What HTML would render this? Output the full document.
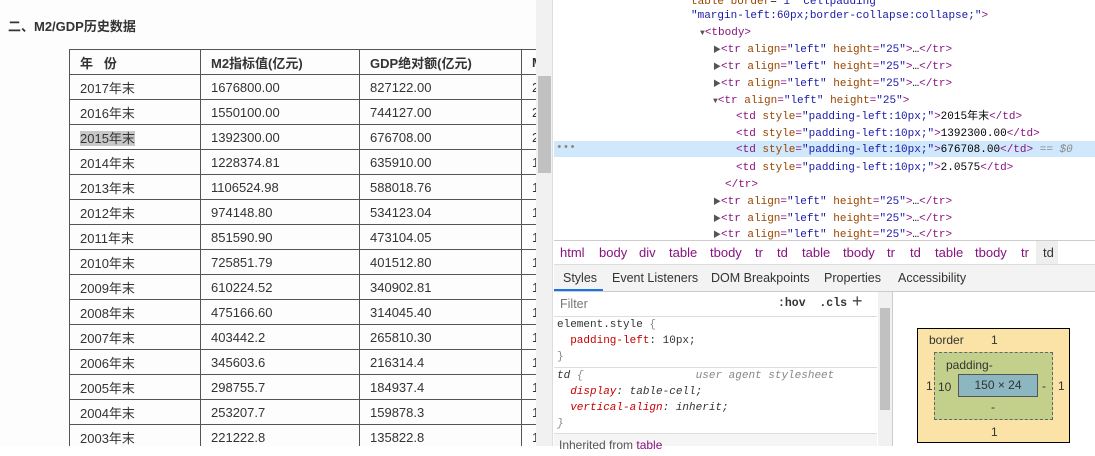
<!DOCTYPE html>
<html><head><meta charset="utf-8"><style>
*{margin:0;padding:0;box-sizing:border-box}
body{width:1095px;height:446px;overflow:hidden;background:#fff;position:relative;font-family:"Liberation Sans","Noto Sans CJK SC",sans-serif}
#page{position:absolute;left:0;top:0;width:536px;height:446px;background:#fdfdfd;overflow:hidden}
h2{position:absolute;left:8px;top:16px;font-size:13px;font-weight:bold;color:#333}
table{position:absolute;left:69px;top:49px;border-collapse:collapse;font-size:13px;color:#333;table-layout:fixed;width:513px}
td{border:1px solid #555;height:25px;padding-left:10px;white-space:nowrap;overflow:hidden}
tr.h td{font-weight:bold}
.sel{background:#c8c8c8}
#sb{position:absolute;left:536px;top:0;width:17px;height:446px;background:#f1f1f1;border-right:1px solid #ddd}
#th{position:absolute;left:538px;top:76px;width:13px;height:97px;background:#c1c1c1}
#dt{position:absolute;left:554px;top:0;width:541px;height:446px;background:#fff}
.m{font-family:"Liberation Mono","Noto Sans CJK SC",monospace;font-size:11px;white-space:pre;position:absolute;line-height:17px}
.t{color:#881280}.a{color:#994500}.v{color:#1a1aa6}.g{color:#888}
.tri{color:#555;font-size:8px}
#crumb{position:absolute;left:0;top:240px;width:541px;height:25px;border-top:1px solid #ccc;border-bottom:1px solid #ddd;font-size:13px;color:#881280;font-family:"Liberation Sans",sans-serif}
#crumb span{position:absolute;top:4px}
#tabs{position:absolute;left:0;top:265px;width:541px;height:27px;border-bottom:1px solid #ccc;font-size:12.5px;color:#333;background:#f3f3f3}
#tabs span{position:absolute;top:6px}
</style></head><body>
<div id="page">
<h2>二、M2/GDP历史数据</h2>
<table>
<colgroup><col style="width:131px"><col style="width:159px"><col style="width:162px"><col style="width:61px"></colgroup>
<tr class="h"><td>年&nbsp;&nbsp;&nbsp;份</td><td>M2指标值(亿元)</td><td>GDP绝对额(亿元)</td><td>M2/GDP</td></tr>
<tr><td>2017年末</td><td>1676800.00</td><td>827122.00</td><td>2.0273</td></tr>
<tr><td>2016年末</td><td>1550100.00</td><td>744127.00</td><td>2.0831</td></tr>
<tr><td><span class="sel">2015年末</span></td><td>1392300.00</td><td>676708.00</td><td>2.0575</td></tr>
<tr><td>2014年末</td><td>1228374.81</td><td>635910.00</td><td>1.9317</td></tr>
<tr><td>2013年末</td><td>1106524.98</td><td>588018.76</td><td>1.8818</td></tr>
<tr><td>2012年末</td><td>974148.80</td><td>534123.04</td><td>1.8238</td></tr>
<tr><td>2011年末</td><td>851590.90</td><td>473104.05</td><td>1.8000</td></tr>
<tr><td>2010年末</td><td>725851.79</td><td>401512.80</td><td>1.8078</td></tr>
<tr><td>2009年末</td><td>610224.52</td><td>340902.81</td><td>1.7900</td></tr>
<tr><td>2008年末</td><td>475166.60</td><td>314045.40</td><td>1.5130</td></tr>
<tr><td>2007年末</td><td>403442.2</td><td>265810.30</td><td>1.5178</td></tr>
<tr><td>2006年末</td><td>345603.6</td><td>216314.4</td><td>1.5977</td></tr>
<tr><td>2005年末</td><td>298755.7</td><td>184937.4</td><td>1.6154</td></tr>
<tr><td>2004年末</td><td>253207.7</td><td>159878.3</td><td>1.5837</td></tr>
<tr><td>2003年末</td><td>221222.8</td><td>135822.8</td><td>1.6288</td></tr>
</table>
</div>
<div id="sb"></div><div id="th"></div>
<div id="dt">
<div style="position:absolute;left:0;top:141px;width:541px;height:16px;background:#cfe8fc"></div>
<div class="m g" style="left:2px;top:140px">•••</div>
<div class="m" style="left:137px;top:-6px"><span class="a">table border</span>=<span class="v">"1" cellpadding</span></div>
<div class="m" style="left:137px;top:8px"><span class="v">"margin-left:60px;border-collapse:collapse;"</span><span class="t">&gt;</span></div>
<div class="m" style="left:146px;top:25px"><span class="tri">▼</span><span class="t">&lt;tbody&gt;</span></div>
<div class="m" style="left:159px;top:42px"><span class="tri">▶</span><span class="t">&lt;tr </span><span class="a">align</span><span class="t">=</span><span class="v">"left"</span> <span class="a">height</span><span class="t">=</span><span class="v">"25"</span><span class="t">&gt;</span>…<span class="t">&lt;/tr&gt;</span></div>
<div class="m" style="left:159px;top:59px"><span class="tri">▶</span><span class="t">&lt;tr </span><span class="a">align</span><span class="t">=</span><span class="v">"left"</span> <span class="a">height</span><span class="t">=</span><span class="v">"25"</span><span class="t">&gt;</span>…<span class="t">&lt;/tr&gt;</span></div>
<div class="m" style="left:159px;top:76px"><span class="tri">▶</span><span class="t">&lt;tr </span><span class="a">align</span><span class="t">=</span><span class="v">"left"</span> <span class="a">height</span><span class="t">=</span><span class="v">"25"</span><span class="t">&gt;</span>…<span class="t">&lt;/tr&gt;</span></div>
<div class="m" style="left:159px;top:93px"><span class="tri">▼</span><span class="t">&lt;tr </span><span class="a">align</span><span class="t">=</span><span class="v">"left"</span> <span class="a">height</span><span class="t">=</span><span class="v">"25"</span><span class="t">&gt;</span></div>
<div class="m" style="left:182px;top:109px"><span class="t">&lt;td </span><span class="a">style</span><span class="t">=</span><span class="v">"padding-left:10px;"</span><span class="t">&gt;</span>2015年末<span class="t">&lt;/td&gt;</span></div>
<div class="m" style="left:182px;top:126px"><span class="t">&lt;td </span><span class="a">style</span><span class="t">=</span><span class="v">"padding-left:10px;"</span><span class="t">&gt;</span>1392300.00<span class="t">&lt;/td&gt;</span></div>
<div class="m" style="left:182px;top:142px"><span class="t">&lt;td </span><span class="a">style</span><span class="t">=</span><span class="v">"padding-left:10px;"</span><span class="t">&gt;</span>676708.00<span class="t">&lt;/td&gt;</span> <span class="g">== <i>$0</i></span></div>
<div class="m" style="left:182px;top:160px"><span class="t">&lt;td </span><span class="a">style</span><span class="t">=</span><span class="v">"padding-left:10px;"</span><span class="t">&gt;</span>2.0575<span class="t">&lt;/td&gt;</span></div>
<div class="m" style="left:171px;top:177px"><span class="t">&lt;/tr&gt;</span></div>
<div class="m" style="left:159px;top:194px"><span class="tri">▶</span><span class="t">&lt;tr </span><span class="a">align</span><span class="t">=</span><span class="v">"left"</span> <span class="a">height</span><span class="t">=</span><span class="v">"25"</span><span class="t">&gt;</span>…<span class="t">&lt;/tr&gt;</span></div>
<div class="m" style="left:159px;top:211px"><span class="tri">▶</span><span class="t">&lt;tr </span><span class="a">align</span><span class="t">=</span><span class="v">"left"</span> <span class="a">height</span><span class="t">=</span><span class="v">"25"</span><span class="t">&gt;</span>…<span class="t">&lt;/tr&gt;</span></div>
<div class="m" style="left:159px;top:227px"><span class="tri">▶</span><span class="t">&lt;tr </span><span class="a">align</span><span class="t">=</span><span class="v">"left"</span> <span class="a">height</span><span class="t">=</span><span class="v">"25"</span><span class="t">&gt;</span>…<span class="t">&lt;/tr&gt;</span></div>
<div id="crumb"><span style="left:6px">html</span><span style="left:45px">body</span><span style="left:85px">div</span><span style="left:115px">table</span><span style="left:156px">tbody</span><span style="left:201px">tr</span><span style="left:223px">td</span><span style="left:248px">table</span><span style="left:289px">tbody</span><span style="left:333px">tr</span><span style="left:356px">td</span><span style="left:381px">table</span><span style="left:421px">tbody</span><span style="left:467px">tr</span><div style="position:absolute;left:482px;top:0;width:22px;height:23px;background:#eee"></div><span style="left:489px;color:#333">td</span></div>
<div id="tabs"><span style="left:9px">Styles</span><div style="position:absolute;left:0;top:24px;width:49px;height:2px;background:#1a73e8"></div><span style="left:58px">Event Listeners</span><span style="left:157px">DOM Breakpoints</span><span style="left:270px">Properties</span><span style="left:344px">Accessibility</span></div>
<div style="position:absolute;left:0;top:292px;width:323px;height:24px;font-size:12.5px;color:#777"><span style="position:absolute;left:6px;top:5px">Filter</span></div>
<div class="m" style="left:224px;top:295px;font-weight:bold;color:#333;font-size:11.5px">:hov  .cls</div>
<div style="position:absolute;left:298px;top:291px;font-size:18px;color:#444">+</div>
<div style="position:absolute;left:0;top:316px;width:323px;height:130px;border-top:1px solid #ddd"></div>
<div class="m" style="left:3px;top:317px;line-height:16px;color:#333">element.style <span class="g">{</span>
  <span style="color:#c80000">padding-left</span>: 10px;
<span class="g">}</span></div>
<div style="position:absolute;left:0;top:367px;width:323px;border-top:1px solid #ddd"></div>
<div class="m" style="left:3px;top:368px;line-height:16px;color:#333;font-style:italic">td <span class="g">{</span>                 <span class="g">user agent stylesheet</span>
  <span style="color:#c80000">display</span>: table-cell;
  <span style="color:#c80000">vertical-align</span>: inherit;
<span class="g">}</span></div>
<div style="position:absolute;left:0;top:433px;width:323px;height:13px;border-top:1px solid #ddd;background:#f5f5f5;font-size:12px;color:#555;padding-left:5px;line-height:22px">Inherited from <span class="t">table</span></div>
<div style="position:absolute;left:324px;top:292px;width:14px;height:154px;background:#f1f1f1"></div>
<div style="position:absolute;left:326px;top:308px;width:10px;height:102px;background:#c1c1c1"></div>
<div style="position:absolute;left:338px;top:292px;width:1px;height:154px;background:#ccc"></div>
<div style="position:absolute;left:363px;top:328px;width:153px;height:115px;background:#fbe3a8;border:1px solid #000;font-size:12px;color:#333">
<span style="position:absolute;left:11px;top:4px">border</span><span style="position:absolute;left:73px;top:4px">1</span>
<span style="position:absolute;left:8px;top:50px">1</span><span style="position:absolute;left:140px;top:50px">1</span><span style="position:absolute;left:73px;top:96px">1</span>
<div style="position:absolute;left:16px;top:23px;width:119px;height:68px;background:#c3d08b;border:1px dashed #666">
<span style="position:absolute;left:11px;top:5px">padding-</span>
<span style="position:absolute;left:3px;top:27px">10</span><span style="position:absolute;left:107px;top:26px">-</span><span style="position:absolute;left:56px;top:47px">-</span>
<div style="position:absolute;left:23px;top:21px;width:80px;height:23px;background:#8cb6c0;border:1px solid #555;text-align:center;line-height:20px">150 × 24</div>
</div></div>
</div>
</body></html>
